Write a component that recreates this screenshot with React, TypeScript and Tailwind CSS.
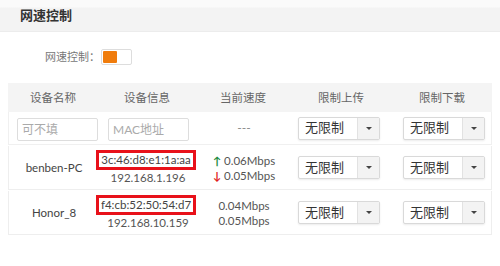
import { FC } from 'react';

const font = {
  fontFamily: 'Lato, "Noto Sans CJK SC", sans-serif',
};

const Select: FC = () => {
  return (
    <div className="flex h-[23px] w-[82px] border border-[#d9d9d9] rounded-[2px] bg-white shadow-[0_1px_2px_rgba(0,0,0,0.08)]">
      <div className="flex-1 flex items-center pl-[6px] text-[13px] text-[#333]">
        无限制
      </div>
      <div className="w-[22px] flex items-center justify-center bg-[#f3f3f3] border-l border-[#e2e2e2]">
        <span className="block w-0 h-0 border-x-[3px] border-x-transparent border-t-[3px] border-t-[#444]" />
      </div>
    </div>
  );
};

interface Device {
  name: string;
  mac: string;
  ip: string;
  up: string;
  down: string;
  arrows: boolean;
}

const devices: Device[] = [
  {
    name: 'benben-PC',
    mac: '3c:46:d8:e1:1a:aa',
    ip: '192.168.1.196',
    up: '0.06Mbps',
    down: '0.05Mbps',
    arrows: true,
  },
  {
    name: 'Honor_8',
    mac: 'f4:cb:52:50:54:d7',
    ip: '192.168.10.159',
    up: '0.04Mbps',
    down: '0.05Mbps',
    arrows: false,
  },
];

const cols = 'grid grid-cols-[90px_98px_94px_102px_100px]';

const App: FC = () => {
  return (
    <div className="w-[500px] h-[266px] bg-white overflow-hidden" style={font}>
      <div className="h-[32px] flex items-center pl-[20px] bg-[linear-gradient(#fafafa_0px,#fafafa_7px,#f3f3f3_8px)] border-b border-[#ececec]">
        <h4 className="text-[13px] font-bold text-[#333]">网速控制</h4>
      </div>
      <div className="h-[51px] flex items-center pl-[45px] pb-[1px]">
        <span className="text-[11px] text-[#777]">网速控制：</span>
        <div className="ml-[1px] flex w-[31px] h-[16px] border border-[#ddd] rounded-[2px] bg-white p-[1px]">
          <div className="w-[14px] h-full bg-[#f07c0c] rounded-[1px]" />
        </div>
      </div>
      <div className="mx-[8px]">
        <div className={`${cols} h-[29px] bg-[#f4f4f4] items-center text-[11.5px] text-[#666] text-center`}>
          <div>设备名称</div>
          <div>设备信息</div>
          <div>当前速度</div>
          <div>限制上传</div>
          <div>限制下载</div>
        </div>
        <div className={`${cols} h-[33px] items-center border-x border-b border-[#f0f0f0]`}>
          <div className="pl-[8px]">
            <input
              placeholder="可不填"
              className="w-[81px] h-[23px] border border-[#ddd] rounded-[2px] px-[4px] text-[12px] placeholder:text-[#aaa] outline-none"
            />
          </div>
          <div className="pl-[9px]">
            <input
              placeholder="MAC地址"
              className="w-[81px] h-[23px] border border-[#ddd] rounded-[2px] px-[4px] text-[12px] placeholder:text-[#aaa] outline-none"
            />
          </div>
          <div className="text-center text-[12px] text-[#888]">---</div>
          <div className="pl-[7px]">
            <Select />
          </div>
          <div className="pl-[10px]">
            <Select />
          </div>
        </div>
        {devices.map((d) => (
          <div
            key={d.name}
            className={`${cols} h-[44px] items-center border-x border-b border-[#eeeeee] mt-[1px]`}
          >
            <div className="text-center text-[11.5px] text-[#444] pt-[1px]">{d.name}</div>
            <div className="flex flex-col items-center">
              <div className="w-[100px] h-[20px] border-[3px] border-[#e8111a] flex items-center justify-center text-[11.5px] text-[#444] leading-none ml-[-4px]">
                {d.mac}
              </div>
              <div className="text-[11.5px] text-[#555] leading-[15px]">{d.ip}</div>
            </div>
            <div className="flex flex-col items-center text-[11.5px] text-[#555] leading-[15px]">
              <div>
                {d.arrows && <span className="text-[#1a8a3a] mr-[3px] text-[11px] font-bold">↑</span>}
                {d.up}
              </div>
              <div>
                {d.arrows && <span className="text-[#e02020] mr-[3px] text-[11px] font-bold">↓</span>}
                {d.down}
              </div>
            </div>
            <div className="pl-[7px]">
              <Select />
            </div>
            <div className="pl-[10px]">
              <Select />
            </div>
          </div>
        ))}
      </div>
    </div>
  );
};

export default App;
